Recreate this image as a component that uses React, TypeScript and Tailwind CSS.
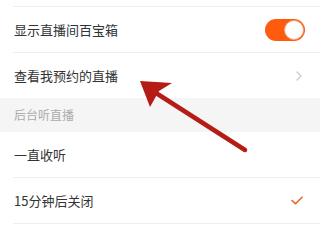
export default function App() {
  const rows = "pl-[13px] bg-white"
  return (
    <div
      className="relative w-[320px] h-[240px] overflow-hidden bg-white text-[#333] text-[13px]"
      style={{ fontFamily: '"Noto Sans CJK SC", "Noto Sans", sans-serif' }}
    >
      {/* previous row, cut off */}
      <div className={rows}>
        <div className="h-[7px] border-b border-[#efefef]" />
      </div>

      <div className={rows}>
        <div className="h-[46px] flex items-center justify-between pl-[1px] pr-[15px] border-b border-[#efefef]">
          <span>显示直播间百宝箱</span>
          <div className="w-[40px] h-[22px] rounded-full bg-[#ff5b0f] flex items-center justify-end pr-[1px]">
            <div className="w-[20px] h-[20px] rounded-full bg-white border border-[#f3a070]" />
          </div>
        </div>
      </div>

      <div className={rows}>
        <div className="h-[45px] flex items-center justify-between pl-[1px] pr-[18px]">
          <span>查看我预约的直播</span>
          <svg width="6" height="10" viewBox="0 0 6 10" fill="none">
            <path d="M1 1l4 4-4 4" stroke="#c9c9c9" strokeWidth="1.2" strokeLinecap="round" strokeLinejoin="round" />
          </svg>
        </div>
      </div>

      <div className="h-[34px] bg-[#f5f5f5] flex items-center pl-[14px] text-[12px] text-[#ababab]">
        后台听直播
      </div>

      <div className={rows}>
        <div className="h-[46px] flex items-center pl-[1px] border-b border-[#efefef]">
          <span>一直收听</span>
        </div>
      </div>

      <div className={rows}>
        <div className="h-[46px] flex items-center justify-between pl-[1px] pr-[17px] border-b border-[#efefef]">
          <span>15分钟后关闭</span>
          <svg width="12" height="9" viewBox="0 0 12 9" fill="none">
            <path d="M1 4.5l3.5 3.2L11 1.2" stroke="#e2672a" strokeWidth="1.6" strokeLinecap="round" strokeLinejoin="round" />
          </svg>
        </div>
      </div>

      <div className={rows}>
        <div className="h-[46px] flex items-center pl-[1px]">
          <span>30分钟后关闭</span>
        </div>
      </div>

      {/* annotation arrow */}
      <svg className="absolute inset-0 pointer-events-none" width="320" height="240" viewBox="0 0 320 240">
        <line x1="245" y1="150" x2="156" y2="93" stroke="#b51c15" strokeWidth="4.5" strokeLinecap="round" />
        <polygon points="140,81 172,83 159,91 150,107" fill="#b51c15" />
      </svg>
    </div>
  )
}
